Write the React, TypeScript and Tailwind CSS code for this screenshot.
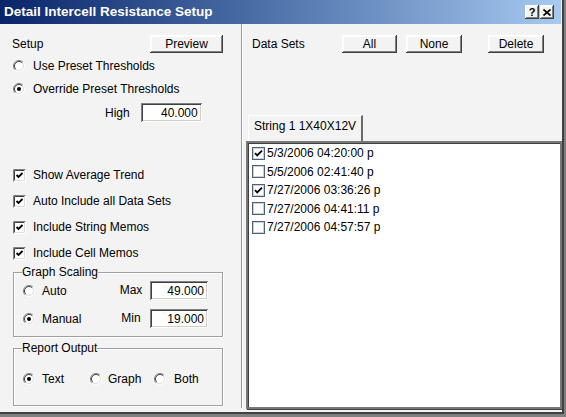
import React from "react";

const BTN =
  "flex items-center justify-center bg-[#f3f3f3] shadow-[inset_-1px_-1px_0_#404040,inset_1px_1px_0_#ffffff,inset_-2px_-2px_0_#808080,inset_2px_2px_0_#fbfbfb]";
const FIELD =
  "flex items-center justify-end bg-white pr-[4px] shadow-[inset_1px_1px_0_#808080,inset_-1px_-1px_0_#ffffff,inset_2px_2px_0_#404040,inset_-2px_-2px_0_#d4d0c8]";
const GROUP =
  "border border-[#a0a0a0] shadow-[1px_1px_0_#ffffff,inset_1px_1px_0_#ffffff] px-[8px]";

function Radio({ checked }: { checked?: boolean }) {
  return (
    <svg width="12" height="12" viewBox="0 0 12 12" className="shrink-0">
      <circle cx="6" cy="6" r="5" fill="#ffffff" />
      <path d="M9.9 2.1 A5.5 5.5 0 0 0 2.1 9.9" stroke="#808080" fill="none" />
      <path d="M9.2 2.8 A4.5 4.5 0 0 0 2.8 9.2" stroke="#404040" fill="none" />
      <path d="M9.9 2.1 A5.5 5.5 0 0 1 2.1 9.9" stroke="#ffffff" fill="none" />
      <path d="M9.2 2.8 A4.5 4.5 0 0 1 2.8 9.2" stroke="#dcdcdc" fill="none" />
      {checked && <circle cx="6" cy="6" r="2" fill="#000000" />}
    </svg>
  );
}

function Check3D({ checked }: { checked?: boolean }) {
  return (
    <svg width="13" height="13" viewBox="0 0 13 13" className="shrink-0">
      <rect x="0" y="0" width="13" height="13" fill="#ffffff" />
      <path d="M0.5 12.5 V0.5 H12.5" stroke="#808080" fill="none" />
      <path d="M1.5 11.5 V1.5 H11.5" stroke="#404040" fill="none" />
      <path d="M1.5 11.5 H11.5 V1.5" stroke="#dcdcdc" fill="none" />
      {checked && (
        <path d="M3.5 6 L5.5 8 L9.5 4" stroke="#000000" strokeWidth="1.8" fill="none" />
      )}
    </svg>
  );
}

function ListCheck({ checked }: { checked?: boolean }) {
  return (
    <svg width="13" height="13" viewBox="0 0 13 13" className="shrink-0">
      <rect x="0.5" y="0.5" width="12" height="12" fill="#ffffff" stroke="#4f5f78" />
      <rect x="1.5" y="1.5" width="10" height="10" fill="none" stroke="#c8d2de" />
      {checked && (
        <path d="M3 6.2 L5.2 8.4 L10 3.6" stroke="#000000" strokeWidth="1.8" fill="none" />
      )}
    </svg>
  );
}

function RadioRow({ checked, label, className = "" }: { checked?: boolean; label: string; className?: string }) {
  return (
    <div className={"flex items-center h-[18px] " + className}>
      <Radio checked={checked} />
      <span className="ml-[8px]">{label}</span>
    </div>
  );
}

function CheckRow({ label, className = "" }: { label: string; className?: string }) {
  return (
    <div className={"flex items-center h-[18px] pl-[1px] " + className}>
      <Check3D checked />
      <span className="ml-[7px]">{label}</span>
    </div>
  );
}

const items = [
  { t: "5/3/2006 04:20:00 p", c: true },
  { t: "5/5/2006 02:41:40 p", c: false },
  { t: "7/27/2006 03:36:26 p", c: true },
  { t: "7/27/2006 04:41:11 p", c: false },
  { t: "7/27/2006 04:57:57 p", c: false },
];

export default function App() {
  return (
    <div className="w-[566px] h-[417px] bg-[#f3f3f3] text-black text-[12px] leading-[14px] font-['Liberation_Sans',Arial,sans-serif] shadow-[inset_-2px_-3px_0_#808080,inset_-4px_-5px_0_#404040] overflow-hidden">
      <div className="w-[562px] h-[412px] flex flex-col">
        {/* Title bar */}
        <div className="h-[24px] w-[561px] flex items-center bg-gradient-to-r from-[#0a246a] to-[#a6caf0] pl-[4px] pr-[7px]">
          <span className="text-white font-bold text-[13.5px] leading-[16px] flex-1">
            Detail Intercell Resistance Setup
          </span>
          <div className={BTN + " w-[14px] h-[14px] text-[11px] font-bold leading-none"}>?</div>
          <div className={BTN + " w-[14px] h-[14px] ml-[1px]"}>
            <svg width="8" height="7" viewBox="0 0 8 7">
              <path d="M0.5 0.5 L7.5 6.5 M7.5 0.5 L0.5 6.5" stroke="#000" strokeWidth="1.6" />
            </svg>
          </div>
        </div>

        {/* Body */}
        <div className="flex-1 flex">
          {/* Left panel */}
          <div className="w-[241px] flex flex-col pt-[11px] pl-[12px]">
            <div className="flex items-center h-[18px]">
              <span className="w-[138px]">Setup</span>
              <div className={BTN + " w-[73px] h-[18px]"}>Preview</div>
            </div>
            <RadioRow label="Use Preset Thresholds" className="mt-[4px] pl-[1px]" />
            <RadioRow label="Override Preset Thresholds" checked className="mt-[5px] pl-[1px]" />
            <div className="flex items-center h-[19px] mt-[5px]">
              <span className="ml-[93px]">High</span>
              <div className={FIELD + " ml-[11px] w-[61px] h-[19px]"}>40.000</div>
            </div>

            <CheckRow label="Show Average Trend" className="mt-[44px]" />
            <CheckRow label="Auto Include all Data Sets" className="mt-[8px]" />
            <CheckRow label="Include String Memos" className="mt-[8px]" />
            <CheckRow label="Include Cell Memos" className="mt-[8px]" />

            <fieldset className={GROUP + " mt-[3px] ml-[1px] w-[210px] h-[72px]"}>
              <legend className="leading-[14px]">Graph Scaling</legend>
              <div className="flex items-center h-[19px] mt-[2px]">
                <div className="flex items-center w-[96px] pl-[1px]">
                  <Radio />
                  <span className="ml-[7px]">Auto</span>
                </div>
                <span className="w-[26px] text-center -mt-[2px]">Max</span>
                <div className={FIELD + " ml-[6px] w-[58px] h-[19px]"}>49.000</div>
              </div>
              <div className="flex items-center h-[19px] mt-[9px]">
                <div className="flex items-center w-[96px] pl-[1px]">
                  <Radio checked />
                  <span className="ml-[7px]">Manual</span>
                </div>
                <span className="w-[26px] text-center -mt-[2px]">Min</span>
                <div className={FIELD + " ml-[6px] w-[58px] h-[19px]"}>19.000</div>
              </div>
            </fieldset>

            <fieldset className={GROUP + " mt-[4px] ml-[1px] w-[210px] h-[65px]"}>
              <legend className="leading-[14px]">Report Output</legend>
              <div className="flex items-center h-[18px] mt-[15px] pl-[1px]">
                <div className="flex items-center w-[67px]">
                  <Radio checked />
                  <span className="ml-[7px]">Text</span>
                </div>
                <div className="flex items-center w-[64px]">
                  <Radio />
                  <span className="ml-[6px]">Graph</span>
                </div>
                <div className="flex items-center">
                  <Radio />
                  <span className="ml-[8px]">Both</span>
                </div>
              </div>
            </fieldset>
          </div>

          {/* Divider */}
          <div className="w-[2px] mb-[4px] border-l border-l-[#9a9a9a] border-r border-r-[#ffffff]" />

          {/* Right panel */}
          <div className="flex-1 flex flex-col pt-[11px]">
            <div className="flex items-center h-[18px] pl-[9px]">
              <span className="w-[90px]">Data Sets</span>
              <div className={BTN + " w-[55px] h-[18px]"}>All</div>
              <div className={BTN + " ml-[9px] w-[56px] h-[18px]"}>None</div>
              <div className={BTN + " ml-[26px] w-[56px] h-[18px]"}>Delete</div>
            </div>

            <div className="mt-[62px] ml-[5px] w-[115px] h-[26px] pt-[3px] pl-[5px] border-l border-t border-white border-r-2 border-r-[#6a6a6a] rounded-tl-[2px]">
              String 1 1X40X12V
            </div>

            <div className="ml-[3px] mb-[3px] flex-1 bg-white border-2 border-[#777777] shadow-[inset_1px_1px_0_#404040,1px_1px_0_#404040] pt-[1px] pl-[4px]">
              {items.map((it) => (
                <div key={it.t} className="flex items-center h-[18.5px]">
                  <ListCheck checked={it.c} />
                  <span className="ml-[2px]">{it.t}</span>
                </div>
              ))}
            </div>
          </div>
        </div>
      </div>
    </div>
  );
}
